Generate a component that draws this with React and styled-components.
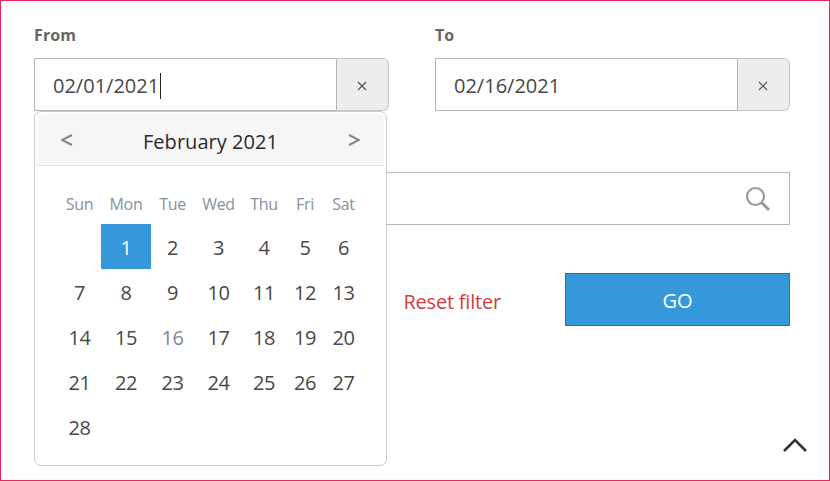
import React from 'react';
import styled, { createGlobalStyle } from 'styled-components';

const Global = createGlobalStyle`
  html, body { margin: 0; padding: 0; background: #fff; }
  body { font-family: "Open Sans", "Noto Sans", "Liberation Sans", sans-serif; }
`;

const Frame = styled.div`
  box-sizing: border-box;
  width: 830px;
  height: 481px;
  border: 1px solid #e8265e;
  padding: 22px 39px 0 33px;
  position: relative;
  overflow: hidden;
`;

const DateRow = styled.div`
  display: grid;
  grid-template-columns: 355px 355px;
  column-gap: 46px;
`;

const Field = styled.div`
  position: relative;
  display: flex;
  flex-direction: column;
`;

const Label = styled.label`
  font-size: 16px;
  line-height: 24px;
  height: 24px;
  font-weight: 700;
  color: #666;
  letter-spacing: 0.1px;
  margin-bottom: 11px;
`;

const InputGroup = styled.div`
  display: flex;
  height: 53px;
  box-sizing: border-box;
`;

const DateValue = styled.div`
  flex: 1;
  box-sizing: border-box;
  border: 1px solid #b5b5b5;
  border-right: none;
  padding: 2px 0 0 18px;
  display: flex;
  align-items: center;
  font-size: 20px;
  color: #484848;
  letter-spacing: 0;
  background: #fff;
`;

const Caret = styled.span`
  display: inline-block;
  width: 1px;
  height: 26px;
  background: #222;
  margin-left: 1px;
`;

const ClearButton = styled.button`
  width: 53px;
  box-sizing: border-box;
  border: 1px solid #c4c6c8;
  border-left: 1px solid #b5b5b5;
  border-radius: 0 6px 6px 0;
  background: #ecedef;
  padding: 2px 2px 0 0;
  display: flex;
  align-items: center;
  justify-content: center;
`;

const Calendar = styled.div`
  position: absolute;
  top: 88px;
  left: 0;
  width: 353px;
  height: 355px;
  box-sizing: border-box;
  border: 1px solid #cbcbcb;
  border-radius: 7px;
  background: #fff;
  z-index: 2;
  padding: 1px;
`;

const CalHeader = styled.div`
  height: 52px;
  box-sizing: border-box;
  margin: 1px 1px 0;
  background: #f6f6f6;
  border-bottom: 1px solid #e6e6e6;
  border-radius: 6px 6px 0 0;
  display: flex;
  align-items: center;
  justify-content: space-between;
  padding: 0 24px 0 24px;
`;

const Month = styled.div`
  font-size: 20px;
  font-weight: 500;
  color: #2b2b2b;
  letter-spacing: 0.05px;
  padding-top: 4px;
`;

const DayGrid = styled.div`
  display: grid;
  grid-template-columns: 43px 50px 43px 49px 42px 40px 37px;
  grid-template-rows: 42px;
  grid-auto-rows: 45px;
  justify-content: center;
  margin: 16px 1px 0 0;
`;

const Weekday = styled.div`
  height: 43px;
  display: flex;
  align-items: center;
  justify-content: center;
  font-size: 16px;
  letter-spacing: -0.3px;
  color: #87919c;
`;

const Day = styled.div`
  display: flex;
  align-items: center;
  justify-content: center;
  padding-top: 2px;
  font-size: 20px;
  letter-spacing: -0.5px;
  color: ${p => (p.$selected ? '#fff' : p.$muted ? '#7d8a97' : '#484848')};
  background: ${p => (p.$selected ? '#3498db' : 'transparent')};
`;

const SearchBox = styled.div`
  margin-top: 61px;
  height: 53px;
  box-sizing: border-box;
  border: 1px solid #b5b5b5;
  display: flex;
  align-items: center;
  justify-content: flex-end;
  padding-right: 18px;
`;

const Actions = styled.div`
  margin-top: 48px;
  display: flex;
  justify-content: flex-end;
  align-items: center;
  gap: 64px;
`;

const ResetLink = styled.a`
  font-size: 20px;
  color: #d23c3f;
  letter-spacing: -0.2px;
  padding-top: 4px;
`;

const GoButton = styled.button`
  width: 225px;
  height: 53px;
  box-sizing: border-box;
  background: #3498db;
  border: 1px solid #1177cc;
  color: #fff;
  font-family: inherit;
  font-size: 20px;
  padding: 2px 0 0;
`;

const ScrollTop = styled.button`
  position: absolute;
  right: 21px;
  bottom: 27px;
  width: 26px;
  height: 16px;
  border: none;
  background: none;
  padding: 0;
  display: flex;
`;

const weekdays = ['Sun', 'Mon', 'Tue', 'Wed', 'Thu', 'Fri', 'Sat'];
const days = [null, ...Array.from({ length: 28 }, (_, i) => i + 1)];

const Cross = () => (
  <svg width="10" height="10" viewBox="0 0 10 10" fill="none" stroke="#555" strokeWidth="1.2">
    <path d="M1 1l8 8M9 1l-8 8" />
  </svg>
);

const Chevron = ({ right }) => (
  <svg width="12" height="14" viewBox="0 0 12 14" fill="none" stroke="#7d8791" strokeWidth="2">
    <path d={right ? 'M1 2l10 5-10 5' : 'M11 2L1 7l10 5'} />
  </svg>
);

export default function App() {
  return (
    <>
      <Global />
      <Frame>
        <DateRow>
          <Field>
            <Label>From</Label>
            <InputGroup>
              <DateValue>02/01/2021<Caret /></DateValue>
              <ClearButton><Cross /></ClearButton>
            </InputGroup>
            <Calendar>
              <CalHeader>
                <Chevron />
                <Month>February 2021</Month>
                <Chevron right />
              </CalHeader>
              <DayGrid>
                {weekdays.map(w => <Weekday key={w}>{w}</Weekday>)}
                {days.map((d, i) => (
                  <Day key={i} $selected={d === 1} $muted={d === 16}>{d}</Day>
                ))}
              </DayGrid>
            </Calendar>
          </Field>
          <Field>
            <Label>To</Label>
            <InputGroup>
              <DateValue>02/16/2021</DateValue>
              <ClearButton><Cross /></ClearButton>
            </InputGroup>
          </Field>
        </DateRow>
        <SearchBox>
          <svg width="26" height="26" viewBox="0 0 26 26" fill="none" stroke="#9a9a9a">
            <circle cx="10.5" cy="10.5" r="8.5" strokeWidth="2.2" />
            <path d="M17 17l7 7" strokeWidth="3" />
          </svg>
        </SearchBox>
        <Actions>
          <ResetLink>Reset filter</ResetLink>
          <GoButton>GO</GoButton>
        </Actions>
        <ScrollTop>
          <svg width="26" height="16" viewBox="0 0 26 16" fill="none" stroke="#333" strokeWidth="2.6">
            <path d="M2 14L13 3l11 11" />
          </svg>
        </ScrollTop>
      </Frame>
    </>
  );
}
